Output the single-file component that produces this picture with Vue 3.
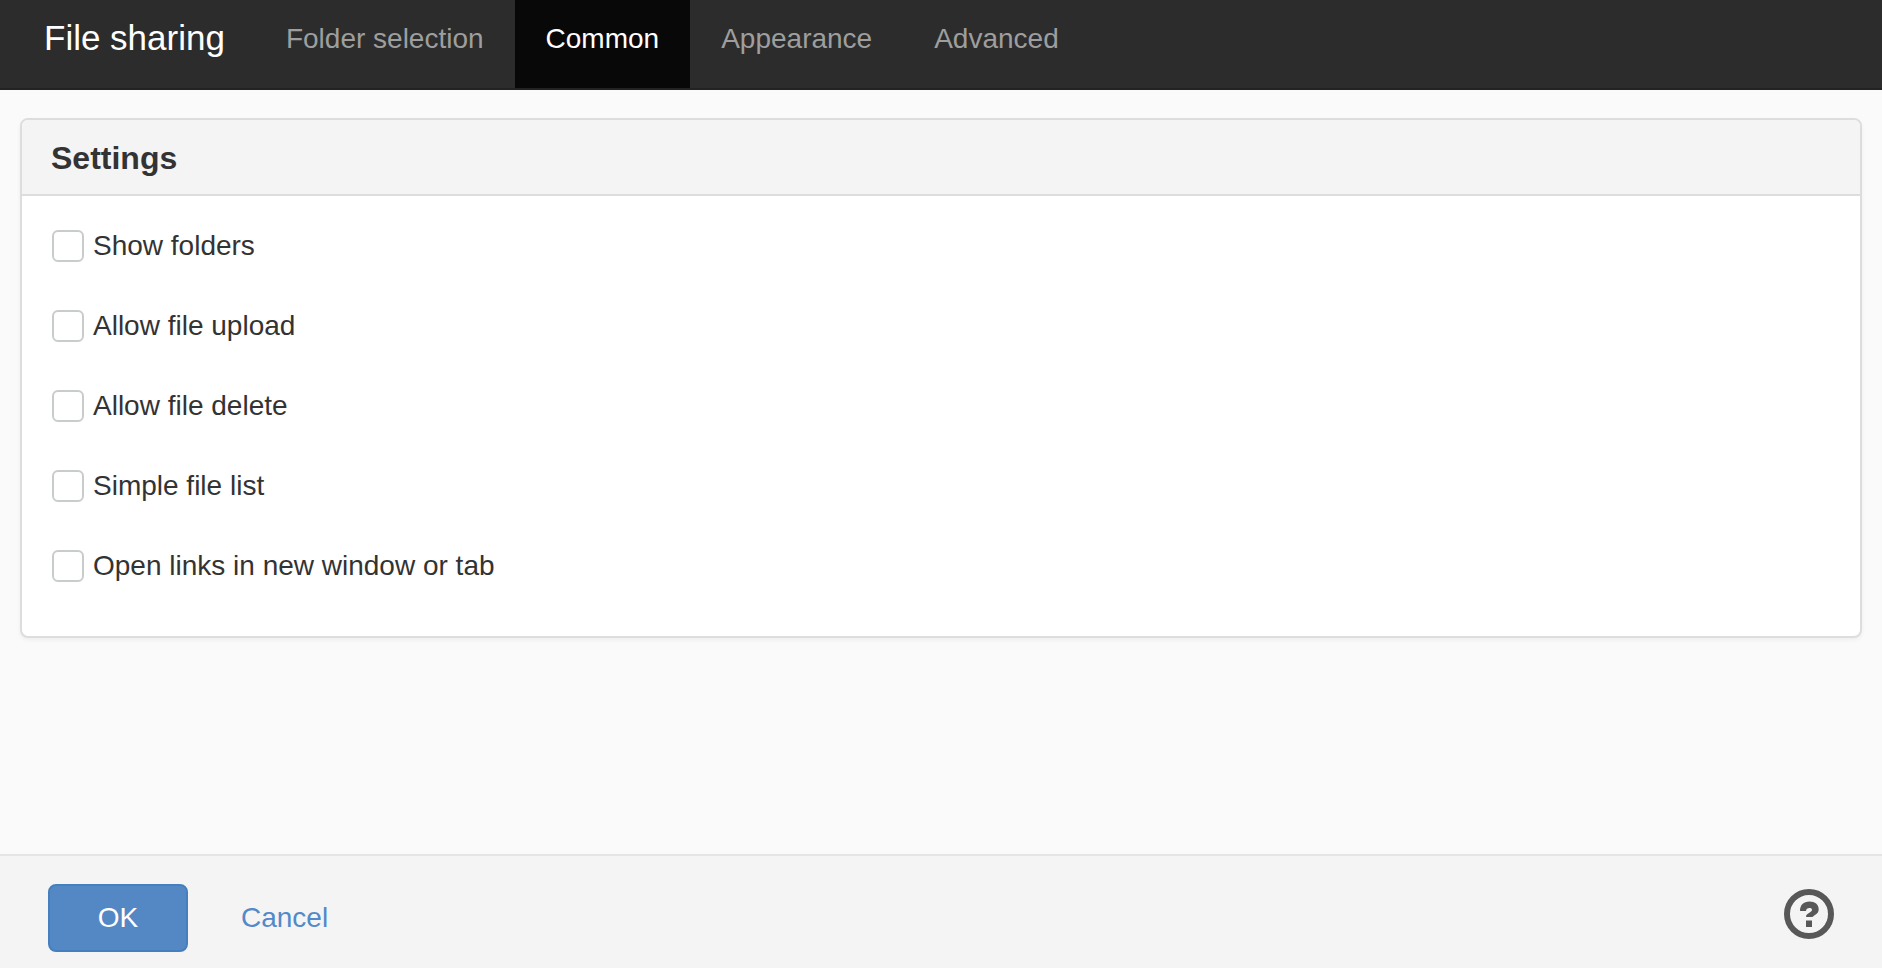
<script setup>
import { ref } from 'vue'

const tabs = ['Folder selection', 'Common', 'Appearance', 'Advanced']
const activeTab = ref('Common')

const settings = ref([
  { id: 'show-folders', label: 'Show folders', checked: false },
  { id: 'allow-upload', label: 'Allow file upload', checked: false },
  { id: 'allow-delete', label: 'Allow file delete', checked: false },
  { id: 'simple-list', label: 'Simple file list', checked: false },
  { id: 'open-new', label: 'Open links in new window or tab', checked: false },
])
</script>

<template>
  <div class="dialog">
    <header class="topbar">
      <h1 class="title">File sharing</h1>
      <nav class="tabs">
        <button
          v-for="tab in tabs"
          :key="tab"
          type="button"
          class="tab"
          :class="{ active: tab === activeTab }"
          @click="activeTab = tab"
        >{{ tab }}</button>
      </nav>
    </header>

    <main class="content">
      <section class="panel">
        <h2 class="panel-title">Settings</h2>
        <div class="panel-body">
          <div v-for="item in settings" :key="item.id" class="option">
            <input :id="item.id" v-model="item.checked" type="checkbox" class="box" />
            <label :for="item.id">{{ item.label }}</label>
          </div>
        </div>
      </section>
    </main>

    <footer class="footer">
      <button type="button" class="ok">OK</button>
      <a href="#" class="cancel" @click.prevent>Cancel</a>
      <button type="button" class="help" aria-label="Help">
        <svg width="50" height="50" viewBox="0 0 50 50" aria-hidden="true">
          <circle cx="25" cy="25" r="22" fill="none" stroke="#585858" stroke-width="6" />
          <path
            fill="#585858"
            d="M16 22C16 16 19.500 12.500 25.500 12.500C31 12.500 34.700 15.500 34.700 20.200C34.700 25 30.500 25.500 28.500 28H22C22 24 28 23.800 28 20.800C28 19.600 27 19 25.500 19C23.500 19 22 20 22 22ZM22 31.500H28V38H22Z"
          />
        </svg>
      </button>
    </footer>
  </div>
</template>

<style>
body {
  margin: 0;
  background: #fafafa;
}
</style>

<style scoped>
.dialog {
  display: flex;
  flex-direction: column;
  min-height: 100vh;
  background: #fafafa;
  color: #333;
  font-family: "Liberation Sans", Arial, sans-serif;
  font-size: 28px;
  line-height: 40px;
}

button {
  font: inherit;
  cursor: pointer;
}

.topbar {
  display: flex;
  background: #2c2c2c;
  border-bottom: 2px solid #252225;
}

.title {
  margin: 0;
  padding: 18px 30px 30px 44px;
  color: #fff;
  font-size: 35px;
  font-weight: 400;
}

.tabs {
  display: flex;
}

.tab {
  padding: 19px 31px 29px;
  border: 0;
  background: transparent;
  color: #9e9e9e;
}

.tab.active {
  background: #080808;
  color: #fff;
}

.content {
  flex: 1;
  padding: 28px 20px;
}

.panel {
  border: 2px solid #ddd;
  border-radius: 8px;
  background: #fff;
  box-shadow: 0 2px 4px rgba(0, 0, 0, 0.05);
}

.panel-title {
  margin: 0;
  padding: 18px 29px 16px;
  border-bottom: 2px solid #ddd;
  border-radius: 6px 6px 0 0;
  background: #f4f4f4;
  font-size: 32px;
  font-weight: 700;
}

.panel-body {
  display: flex;
  flex-direction: column;
  gap: 40px;
  padding: 30px;
  padding-bottom: 50px;
}

.option {
  display: flex;
  align-items: center;
  gap: 9px;
}

.box {
  appearance: none;
  box-sizing: border-box;
  width: 32px;
  height: 32px;
  margin: 0;
  border: 2px solid #c8cccb;
  border-radius: 6px;
  background: #fff;
}

.box:checked {
  background: #5488c5;
}

.footer {
  display: flex;
  align-items: center;
  padding: 28px 48px 16px;
  border-top: 2px solid #e5e5e5;
  background: #f4f4f4;
}

.ok {
  width: 140px;
  padding: 12px;
  border: 2px solid #467fbd;
  border-radius: 8px;
  background: #5488c5;
  color: #fff;
}

.cancel {
  margin-left: 53px;
  color: #5389c9;
  text-decoration: none;
}

.help {
  align-self: flex-start;
  display: flex;
  margin: 5px 0 0 auto;
  padding: 0;
  border: 0;
  border-radius: 50%;
  background: transparent;
}
</style>
